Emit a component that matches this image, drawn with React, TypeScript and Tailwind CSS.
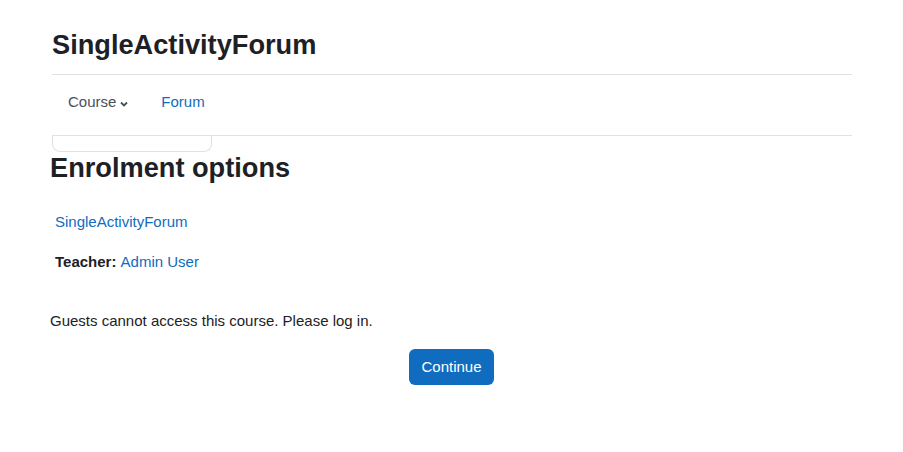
export default function App() {
  return (
    <div className="min-h-[452px] bg-white text-[#1d2125] font-['Liberation_Sans',Arial,sans-serif] text-[15px] pl-[50px] pr-[51px]">
      <header className="ml-[2px] pt-[27px]">
        <h1 className="text-[27.2px] leading-[36px] font-bold pb-[11px] border-b border-[#dee2e6]">SingleActivityForum</h1>
        <nav className="flex items-center h-[61px] pb-[5px] border-b border-[#dee2e6]">
          <button className="flex items-center gap-[3px] px-[16px] text-[#495057]">
            Course
            <svg width="10" height="10" viewBox="0 0 10 10" className="mt-[3px]">
              <path d="M2 3.5 L5 6.5 L8 3.5" fill="none" stroke="#495057" strokeWidth="1.8" />
            </svg>
          </button>
          <a className="px-[16px] text-[#0f6cbf]">Forum</a>
        </nav>
        <div className="w-[160px] h-[17px] -mt-[1px] border border-t-0 border-[#dee2e6] rounded-b-[8px]" />
      </header>
      <main>
        <h2 className="text-[27.2px] leading-[34px] font-bold -mt-[1px]">Enrolment options</h2>
        <div className="pl-[5px] pt-[26px]">
          <a className="text-[#0f6cbf] leading-[22px] block">SingleActivityForum</a>
          <p className="mt-[18px] leading-[22px]">
            <span className="font-bold">Teacher: </span>
            <a className="text-[#0f6cbf]">Admin User</a>
          </p>
        </div>
        <p className="mt-[37px] leading-[22px]">Guests cannot access this course. Please log in.</p>
        <div className="flex justify-center mt-[17px]">
          <button className="bg-[#0f6cbf] text-white rounded-[6px] h-[36px] px-[12px] ml-[1px]">Continue</button>
        </div>
      </main>
    </div>
  );
}
